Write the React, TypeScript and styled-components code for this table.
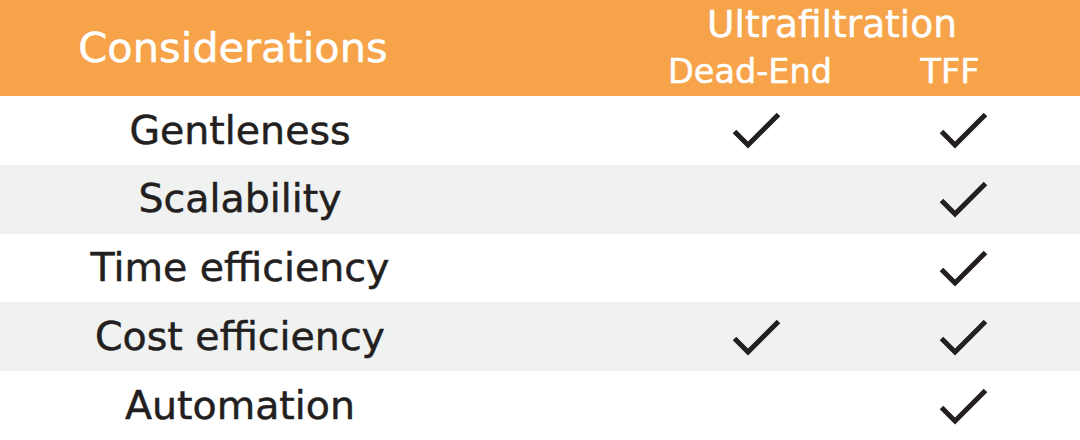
import React from "react";
import styled, { createGlobalStyle } from "styled-components";

const GlobalStyle = createGlobalStyle`
  html, body { margin: 0; padding: 0; background: #ffffff; }
  body { font-family: "DejaVu Sans", "Liberation Sans", sans-serif; }
`;

const Table = styled.div`
  width: 1080px;
  height: 440px;
  display: flex;
  flex-direction: column;
  overflow: hidden;
  color: #231f20;
  -webkit-text-stroke: 0.5px currentColor;
`;

const Header = styled.div`
  height: 96px;
  flex: none;
  display: grid;
  grid-template-columns: 650px 430px;
  background: #f6a349;
  color: #ffffff;
`;

const HeaderLabel = styled.div`
  display: flex;
  align-items: center;
  justify-content: center;
  padding-right: 184px;
  font-size: 41.5px;
  line-height: 1;
`;

const HeaderGroup = styled.div`
  display: flex;
  flex-direction: column;
  padding-top: 6px;
  gap: 11px;
`;

const GroupTitle = styled.div`
  width: 400px;
  padding-right: 36px;
  box-sizing: border-box;
  text-align: center;
  font-size: 37.5px;
  line-height: 37.5px;
`;

const SubRow = styled.div`
  display: grid;
  grid-template-columns: 200px 200px;
`;

const SubTitle = styled.div`
  text-align: center;
  font-size: 33.5px;
  line-height: 33.5px;
`;

const Row = styled.div<{ $shaded?: boolean }>`
  height: 68.8px;
  flex: none;
  display: grid;
  grid-template-columns: 649px 200px 200px;
  column-gap: 7px;
  align-items: center;
  background: ${(p) => (p.$shaded ? "#f0f2f1" : "#ffffff")};
`;

const Label = styled.div`
  padding-right: 169px;
  text-align: center;
  font-size: 39.5px;
  line-height: 1;
`;

const Cell = styled.div`
  display: flex;
  justify-content: center;
  align-items: center;
  height: 100%;
`;

const Check = () => (
  <svg width="50" height="40" viewBox="0 0 50 40" aria-hidden="true">
    <polyline
      points="3.5,21.5 17,35 47.5,4.5"
      fill="none"
      stroke="#231f20"
      strokeWidth="5"
      strokeLinecap="butt"
      strokeLinejoin="miter"
    />
  </svg>
);

const rows: { label: string; deadEnd: boolean; tff: boolean }[] = [
  { label: "Gentleness", deadEnd: true, tff: true },
  { label: "Scalability", deadEnd: false, tff: true },
  { label: "Time efficiency", deadEnd: false, tff: true },
  { label: "Cost efficiency", deadEnd: true, tff: true },
  { label: "Automation", deadEnd: false, tff: true },
];

export default function App() {
  return (
    <>
      <GlobalStyle />
      <Table>
        <Header>
          <HeaderLabel>Considerations</HeaderLabel>
          <HeaderGroup>
            <GroupTitle>Ultrafiltration</GroupTitle>
            <SubRow>
              <SubTitle>Dead-End</SubTitle>
              <SubTitle>TFF</SubTitle>
            </SubRow>
          </HeaderGroup>
        </Header>
        {rows.map((r, i) => (
          <Row key={r.label} $shaded={i % 2 === 1}>
            <Label>{r.label}</Label>
            <Cell>{r.deadEnd && <Check />}</Cell>
            <Cell>{r.tff && <Check />}</Cell>
          </Row>
        ))}
      </Table>
    </>
  );
}
